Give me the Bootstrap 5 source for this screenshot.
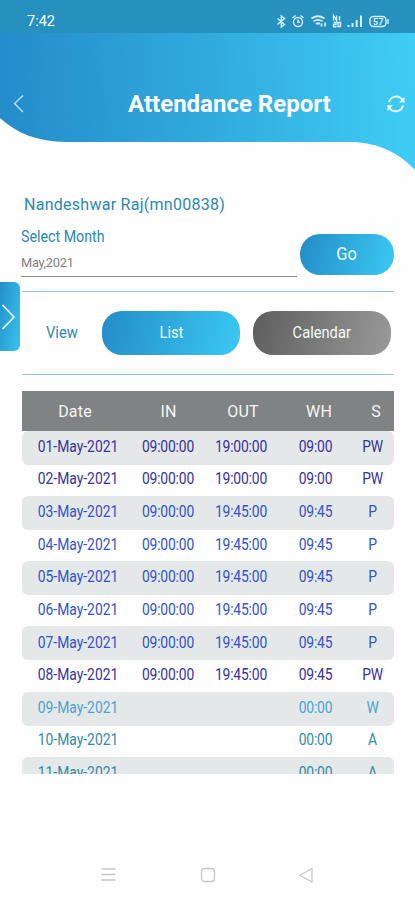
<!DOCTYPE html>
<html lang="en">
<head>
<meta charset="utf-8">
<meta name="viewport" content="width=device-width, initial-scale=1">
<title>Attendance Report</title>
<link href="https://cdn.jsdelivr.net/npm/bootstrap@5.3.0/dist/css/bootstrap.min.css" rel="stylesheet">
<style>
body{font-family:Roboto,"Noto Sans",sans-serif;color:#2b88b4;line-height:1.2}
.screen{width:415px;height:900px;background:#fefefe}
.top-area{height:170px}
.wave{inset:0}
.status{height:33px;padding:13px 25px 0 27px;font-size:14.5px;background:#2690bf}
.title-bar{height:142px;margin-top:-33px;padding:66px 9px 0 12px}
.title-bar h1{font-size:24px;margin-left:102px}
.status,.title-bar{z-index:1}
.user{font-size:16px;letter-spacing:.27px;padding:25px 0 0 24px;height:57px}
.form-zone{margin:0 21px;height:64px}
.month{width:276px;border-bottom:1.5px solid #8b8b8b;height:50px}
.month label{font-size:16px;transform:scaleX(.89);transform-origin:left}
.month div{font-size:13.5px;letter-spacing:-.3px;color:#808080;margin-top:8px;transform:scaleX(.95);transform-origin:left}
.pill{border:0;color:#f2fafd;font-size:16.5px;border-radius:20px;background:linear-gradient(105deg,#238cc8,#3bc9f3)}
.narrow{display:inline-block;transform:scaleX(.89)}
.pill.go{width:94px;height:41px;margin-top:7px;font-size:18.5px}
.pill.view{width:138px;height:44px}
.pill.dim{background:linear-gradient(105deg,#5d5d5d,#9a9a9a);margin-right:3px}
.view-zone{margin:0 21px 0 22px;height:84px;border-top:1.5px solid #8fc5d6;border-bottom:1.5px solid #8fc5d6}
.view-zone .lbl{width:80px;font-size:16.5px}
.drawer{left:0;top:282px;width:20px;height:69px;border-radius:0 6px 6px 0;background:linear-gradient(100deg,#258fca,#38c3ef)}
.sheet{margin:16px 21px 0 22px;height:383px}
.g{display:grid;align-items:center;text-align:center}
.head{grid-template-columns:106px 81px 68px 84px 30px;height:39.5px;background:#808383;color:#f5f5f5;font-size:16px;letter-spacing:.2px;padding-top:2px}
.line{grid-template-columns:112px 68px 78px 71px 43px;height:31.3px;font-size:15.6px;white-space:nowrap;padding-bottom:1px}
.line:nth-child(even){height:34px;background:#e5e8e8;border-radius:6px}
.line span{transform:scaleX(.89);letter-spacing:-.2px}
.line span:first-child{letter-spacing:0}
.pw{color:#3632a0}.pr{color:#3153cc}.wk{color:#4aa3cf}.ab{color:#328ca5}
.nav-keys{padding:0 100px;margin-top:93px}
</style>
<script src="https://cdn.jsdelivr.net/npm/bootstrap@5.3.0/dist/js/bootstrap.bundle.min.js"></script>
</head>
<body>
<main class="screen position-relative overflow-hidden">
<header class="top-area position-relative">
<svg class="wave position-absolute" width="415" height="170" viewBox="0 0 415 170"><defs><linearGradient id="sky" gradientUnits="userSpaceOnUse" x1="0" y1="80" x2="415" y2="65"><stop stop-color="#248ccb"/><stop offset=".5" stop-color="#31aadd"/><stop offset="1" stop-color="#3fcdf5"/></linearGradient></defs><path d="M0 0H415V170C397 151 375 142 350 142H66C38 142 16 133 0 118Z" fill="url(#sky)"/></svg>
<div class="status position-relative d-flex justify-content-between text-white"><span>7:42</span>
<svg width="114" height="16" viewBox="276 13 114 16" fill="none" stroke="#d9eef6" stroke-width="1.4"><path d="M277.500 18.500l7 6-3.200 2.500V16l3.200 2.500-7 6"/><circle cx="298" cy="22" r="4.500"/><path d="M298 19.500V22.300h2M292.500 18l3-2.500M303.500 18l-3-2.500"/><path d="M311.500 18.500q6.500-4.500 13 0M313.500 21.300q4.500-3 9 0M316 24q2-1.500 4 0" stroke-width="1.800"/><path d="M321.500 26.500v-3M325 26.500v-4" stroke-width="1.700"/><path d="M333.500 20.500v-5l3 5v-5M339.500 16v4.500M333.500 22.500h2.500v2h-2.500v2.300h3M338 22.500h2.500v4h-2.500z"/><path d="M348.500 27v-2M352.500 27v-4M356.700 27v-7M361 27V15.500" stroke-width="2"/><rect x="370" y="16.500" width="16" height="10" rx="3.500"/><path d="M388 19v5"/><text x="373" y="25" font-family="Roboto" font-size="9" font-weight="bold" fill="#d9eef6" stroke="none">57</text></svg></div>
<div class="title-bar position-relative d-flex align-items-center text-white">
<svg width="14" height="20" viewBox="0 0 14 20" fill="none" stroke="#bfe6f6" stroke-width="1.300"><path d="M11 1.500L2.500 9.500 11 18"/></svg>
<h1 class="mb-0 fw-bold">Attendance Report</h1>
<svg class="ms-auto" width="20" height="20" viewBox="0 0 20 20" fill="none" stroke="#e9f9fe" stroke-width="1.900"><path d="M3 8A7.500 7.500 0 0 1 16.500 6M17 11.500A7.500 7.500 0 0 1 3.500 14"/><path d="M18.500 3V8.500h-5.500zM1.500 17V11h5.500z" fill="#e9f9fe" stroke="none"/></svg>
</div>
</header>
<div class="user">Nandeshwar Raj(mn00838)</div>
<section class="form-zone d-flex justify-content-between">
<div class="month"><label class="d-block">Select Month</label><div>May,2021</div></div>
<button class="pill go p-0"><span class="narrow">Go</span></button>
</section>
<section class="view-zone d-flex align-items-center"><span class="lbl text-center"><span class="narrow">View</span></span><button class="pill view p-0"><span class="narrow">List</span></button><button class="pill view dim ms-auto p-0"><span class="narrow">Calendar</span></button></section>
<section class="sheet overflow-hidden">
<div class="g head"><span>Date</span><span>IN</span><span>OUT</span><span>WH</span><span>S</span></div>
<div class="g line pw"><span>01-May-2021</span><span>09:00:00</span><span>19:00:00</span><span>09:00</span><span>PW</span></div>
<div class="g line pw"><span>02-May-2021</span><span>09:00:00</span><span>19:00:00</span><span>09:00</span><span>PW</span></div>
<div class="g line pr"><span>03-May-2021</span><span>09:00:00</span><span>19:45:00</span><span>09:45</span><span>P</span></div>
<div class="g line pr"><span>04-May-2021</span><span>09:00:00</span><span>19:45:00</span><span>09:45</span><span>P</span></div>
<div class="g line pr"><span>05-May-2021</span><span>09:00:00</span><span>19:45:00</span><span>09:45</span><span>P</span></div>
<div class="g line pr"><span>06-May-2021</span><span>09:00:00</span><span>19:45:00</span><span>09:45</span><span>P</span></div>
<div class="g line pr"><span>07-May-2021</span><span>09:00:00</span><span>19:45:00</span><span>09:45</span><span>P</span></div>
<div class="g line pw"><span>08-May-2021</span><span>09:00:00</span><span>19:45:00</span><span>09:45</span><span>PW</span></div>
<div class="g line wk"><span>09-May-2021</span><span></span><span></span><span>00:00</span><span>W</span></div>
<div class="g line ab"><span>10-May-2021</span><span></span><span></span><span>00:00</span><span>A</span></div>
<div class="g line ab"><span>11-May-2021</span><span></span><span></span><span>00:00</span><span>A</span></div>
</section>
<footer class="nav-keys d-flex justify-content-between">
<svg width="16" height="16" viewBox="0 0 16 16" stroke="#c6c6c6" stroke-width="1.300"><path d="M1.500 2h14M1.500 7.500h14M1.500 13h14"/></svg>
<svg width="16" height="16" viewBox="0 0 16 16" fill="none" stroke="#c6c6c6" stroke-width="1.300"><rect x="1.500" y="1.500" width="13" height="13" rx="3"/></svg>
<svg width="16" height="16" viewBox="0 0 16 16" fill="none" stroke="#c6c6c6" stroke-width="1.300" stroke-linejoin="round"><path d="M13 1.500v13.500L.8 8.200z"/></svg>
</footer>
<button class="drawer position-absolute border-0 p-0 d-flex align-items-center" aria-label="Open menu"><svg width="17" height="28" viewBox="0 0 17 28" fill="none" stroke="#e7f8fd" stroke-width="1.700"><path d="M2.500 2L14 14 2.500 26"/></svg></button>
</main>
</body>
</html>
